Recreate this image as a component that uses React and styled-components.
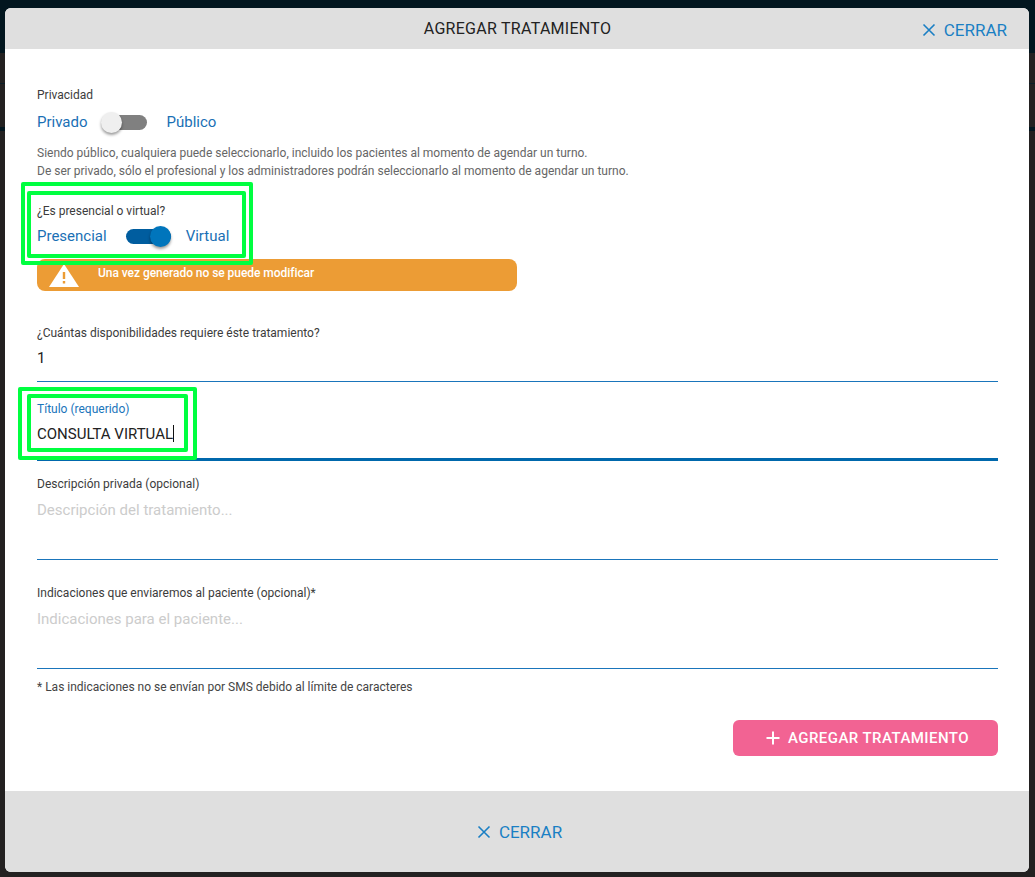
import styled, { createGlobalStyle } from 'styled-components';

const GlobalStyle = createGlobalStyle`
  html, body {
    margin: 0;
    padding: 0;
    font-family: Roboto, "Liberation Sans", sans-serif;
  }
`;

const Backdrop = styled.div`
  position: relative;
  box-sizing: border-box;
  width: 1035px;
  height: 877px;
  padding: 8px 6px 5px 5px;
  overflow: hidden;
  background: linear-gradient(
    to bottom,
    #02161f 0,
    #02161f 53px,
    #232121 53px,
    #232121 83px,
    #0b1e28 83px,
    #0b1e28 84px,
    #232121 84px,
    #232121 127px,
    #02161f 127px,
    #02161f 131px,
    #232121 131px,
    #232121 100%
  );
`;

const Modal = styled.div`
  display: flex;
  flex-direction: column;
  height: 100%;
  background: #fff;
  border-radius: 6px;
  overflow: hidden;
`;

const Header = styled.header`
  position: relative;
  display: flex;
  align-items: center;
  justify-content: center;
  flex: 0 0 41px;
  background: #dfdfdf;
`;

const HeaderTitle = styled.h1`
  margin: 0 0 0 1px;
  font-size: 16px;
  font-weight: 400;
  letter-spacing: 0.27px;
  color: #222;
`;

const CloseButton = styled.button`
  display: flex;
  align-items: center;
  gap: 8px;
  padding: 0;
  border: 0;
  background: none;
  font: inherit;
  font-size: 17px;
  color: #1a7fc4;
`;

const HeaderClose = styled(CloseButton)`
  position: absolute;
  right: 22px;
  top: 12px;
`;

const FooterClose = styled(CloseButton)`
  padding-left: 5px;
`;

const Body = styled.main`
  flex: 1;
  padding: 39px 31px 0 32px;
`;

const Label = styled.div`
  font-size: 12px;
  line-height: 14px;
  color: ${p => (p.$active ? '#1a75bb' : '#3c3c3c')};
`;

const ToggleRow = styled.div`
  display: flex;
  align-items: center;
  height: 24px;
  margin-top: ${p => p.$top}px;
`;

const ToggleText = styled.span`
  margin-left: ${p => p.$left || 0}px;
  font-size: 15px;
  color: #1a70b5;
`;

const Track = styled.span`
  position: relative;
  display: block;
  width: 45px;
  height: 15px;
  margin-left: ${p => p.$left}px;
  border-radius: 8px;
  background: ${p => (p.$on ? '#005d9f' : '#808080')};
`;

const Thumb = styled.span`
  position: absolute;
  top: -3px;
  left: ${p => (p.$on ? '24px' : '-1px')};
  width: 21px;
  height: 21px;
  border-radius: 50%;
  background: ${p => (p.$on ? '#0075bc' : '#efefef')};
  box-shadow: 0 2px 3px rgba(0, 0, 0, 0.4);
`;

const Help = styled.p`
  margin: 10px 0 0;
  font-size: 12px;
  line-height: 18px;
  color: #666;
`;

const VirtualBlock = styled.div`
  margin-top: 24px;
`;

const Warning = styled.div`
  display: flex;
  align-items: center;
  gap: 19px;
  box-sizing: border-box;
  width: 480px;
  height: 32px;
  margin-top: 11px;
  padding-left: 12px;
  border-radius: 8px;
  background: #ec9c35;
  font-size: 12px;
  font-weight: 500;
  letter-spacing: -0.05px;
  color: #fff;
`;

const WarningText = styled.span`
  margin-bottom: 4px;
`;

const Field = styled.div`
  margin-top: ${p => p.$top}px;
  height: ${p => p.$height}px;
  border-bottom: ${p => (p.$focus ? 3 : 1)}px solid ${p => (p.$focus ? '#0068ac' : '#1a75bb')};
`;

const Value = styled.div`
  display: flex;
  align-items: center;
  margin-top: ${p => (p.$placeholder ? 9 : 8)}px;
  height: 19px;
  font-size: 15px;
  color: ${p => (p.$placeholder ? '#ccc' : '#222')};
`;

const Caret = styled.span`
  display: block;
  width: 1px;
  height: 17px;
  background: #111;
`;

const Footnote = styled.p`
  margin: 11px 0 0;
  font-size: 12px;
  line-height: 14px;
  color: #444;
`;

const Actions = styled.div`
  display: flex;
  justify-content: flex-end;
  margin-top: 26px;
`;

const AddButton = styled.button`
  display: flex;
  align-items: center;
  justify-content: center;
  gap: 8px;
  width: 265px;
  height: 36px;
  padding: 0 0 0 4px;
  border: 0;
  border-radius: 6px;
  background: #f26393;
  font: inherit;
  font-size: 15px;
  font-weight: 500;
  letter-spacing: 0.45px;
  color: #fff;
`;

const Footer = styled.footer`
  display: flex;
  align-items: center;
  justify-content: center;
  flex: 0 0 81px;
  background: #dfdfdf;
`;

const Mark = styled.div`
  position: absolute;
  left: ${p => p.$x}px;
  top: ${p => p.$y}px;
  width: ${p => p.$w}px;
  height: ${p => p.$h}px;
  box-sizing: border-box;
  border: 4px solid #00ff40;
  border-radius: 2px;
  pointer-events: none;
`;

const XIcon = ({ size }) => (
  <svg width={size} height={size} viewBox="0 0 14 14" fill="none" stroke="currentColor" strokeWidth="1.6">
    <path d="M1.5 1.5l11 11M12.5 1.5l-11 11" />
  </svg>
);

const WarningIcon = () => (
  <svg width="30" height="23" viewBox="0 0 30 23">
    <path d="M15 0L30 23H0z" fill="#fff" />
    <path d="M13.8 8h2.4v7h-2.4zM13.8 17h2.4v2.4h-2.4z" fill="#ec9c35" />
  </svg>
);

const PlusIcon = () => (
  <svg width="14" height="14" viewBox="0 0 14 14" fill="none" stroke="#fff" strokeWidth="2">
    <path d="M7 0.5v13M0.5 7h13" />
  </svg>
);

export default function App() {
  return (
    <Backdrop>
      <GlobalStyle />
      <Modal>
        <Header>
          <HeaderTitle>AGREGAR TRATAMIENTO</HeaderTitle>
          <HeaderClose><XIcon size={14} />CERRAR</HeaderClose>
        </Header>
        <Body>
          <Label>Privacidad</Label>
          <ToggleRow $top={8}>
            <ToggleText>Privado</ToggleText>
            <Track $left={14}><Thumb /></Track>
            <ToggleText $left={20}>Público</ToggleText>
          </ToggleRow>
          <Help>
            Siendo público, cualquiera puede seleccionarlo, incluido los pacientes al momento de agendar un turno.
            <br />
            De ser privado, sólo el profesional y los administradores podrán seleccionarlo al momento de agendar un turno.
          </Help>
          <VirtualBlock>
            <Label>¿Es presencial o virtual?</Label>
            <ToggleRow $top={6}>
              <ToggleText>Presencial</ToggleText>
              <Track $on $left={19}><Thumb $on /></Track>
              <ToggleText $left={15}>Virtual</ToggleText>
            </ToggleRow>
          </VirtualBlock>
          <Warning><WarningIcon /><WarningText>Una vez generado no se puede modificar</WarningText></Warning>
          <Field $top={35} $height={55}>
            <Label>¿Cuántas disponibilidades requiere éste tratamiento?</Label>
            <Value>1</Value>
          </Field>
          <Field $top={20} $height={56} $focus>
            <Label $active>Título (requerido)</Label>
            <Value>CONSULTA VIRTUAL<Caret /></Value>
          </Field>
          <Field $top={16} $height={82}>
            <Label>Descripción privada (opcional)</Label>
            <Value $placeholder>Descripción del tratamiento...</Value>
          </Field>
          <Field $top={26} $height={82}>
            <Label>Indicaciones que enviaremos al paciente (opcional)*</Label>
            <Value $placeholder>Indicaciones para el paciente...</Value>
          </Field>
          <Footnote>* Las indicaciones no se envían por SMS debido al límite de caracteres</Footnote>
          <Actions>
            <AddButton><PlusIcon />AGREGAR TRATAMIENTO</AddButton>
          </Actions>
        </Body>
        <Footer>
          <FooterClose><XIcon size={14} />CERRAR</FooterClose>
        </Footer>
      </Modal>
      <Mark $x={21} $y={182} $w={232} $h={83} />
      <Mark $x={27} $y={191} $w={219} $h={67} />
      <Mark $x={18} $y={387} $w={179} $h={73} />
      <Mark $x={27} $y={394} $w={161} $h={58} />
    </Backdrop>
  );
}
